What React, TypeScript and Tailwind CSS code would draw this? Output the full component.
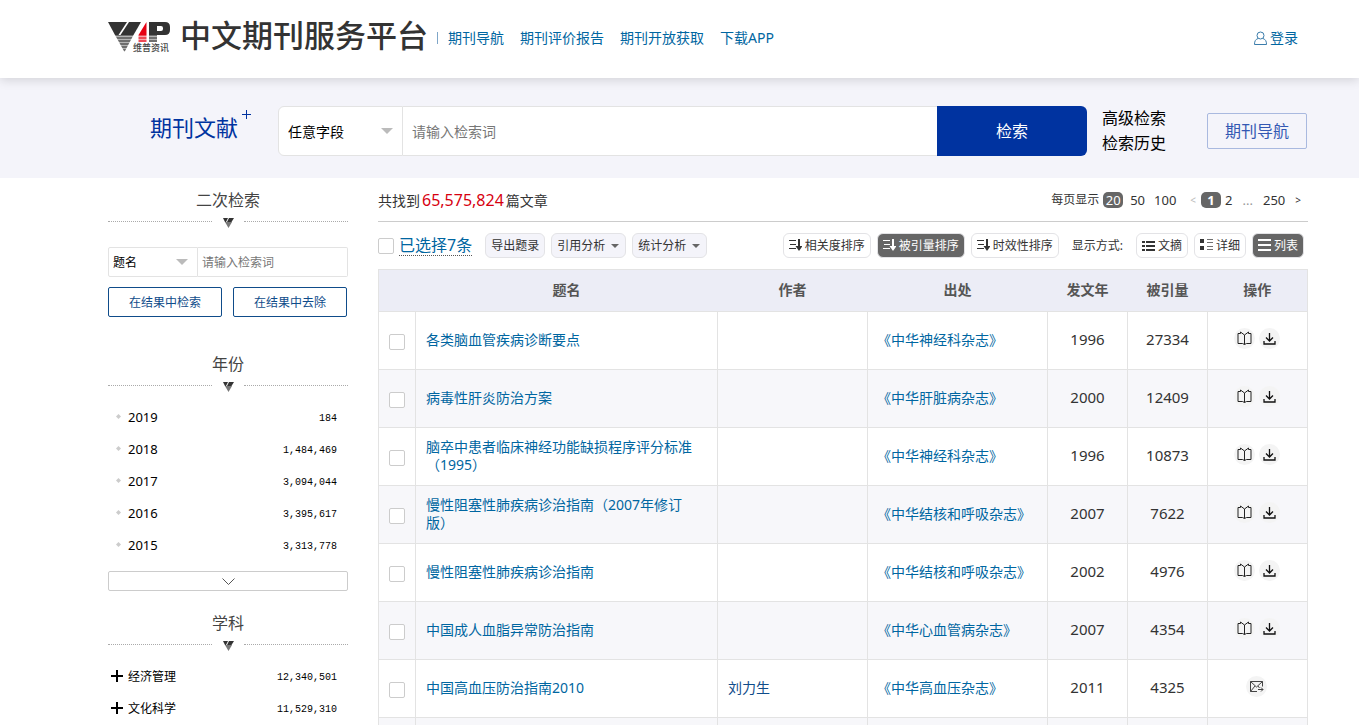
import React from "react";
import clsx from "clsx";

type Article = {
  title: string;
  author?: string;
  journal: string;
  year: number;
  cited: number;
  request?: boolean;
};

const navLinks = ["期刊导航", "期刊评价报告", "期刊开放获取", "下载APP"];

const years = [
  { name: "2019", count: "184" },
  { name: "2018", count: "1,484,469" },
  { name: "2017", count: "3,094,044" },
  { name: "2016", count: "3,395,617" },
  { name: "2015", count: "3,313,778" },
];

const subjects = [
  { name: "经济管理", count: "12,340,501" },
  { name: "文化科学", count: "11,529,310" },
];

const articles: Article[] = [
  { title: "各类脑血管疾病诊断要点", journal: "《中华神经科杂志》", year: 1996, cited: 27334 },
  { title: "病毒性肝炎防治方案", journal: "《中华肝脏病杂志》", year: 2000, cited: 12409 },
  { title: "脑卒中患者临床神经功能缺损程序评分标准（1995）", journal: "《中华神经科杂志》", year: 1996, cited: 10873 },
  { title: "慢性阻塞性肺疾病诊治指南（2007年修订版）", journal: "《中华结核和呼吸杂志》", year: 2007, cited: 7622 },
  { title: "慢性阻塞性肺疾病诊治指南", journal: "《中华结核和呼吸杂志》", year: 2002, cited: 4976 },
  { title: "中国成人血脂异常防治指南", journal: "《中华心血管病杂志》", year: 2007, cited: 4354 },
  { title: "中国高血压防治指南2010", author: "刘力生", journal: "《中华高血压杂志》", year: 2011, cited: 4325, request: true },
];

const Logo = () => (
  <svg width="62" height="32" viewBox="0 0 62 32" className="shrink-0" aria-label="维普资讯">
    <defs>
      <pattern id="stripes" width="4" height="3" patternUnits="userSpaceOnUse">
        <rect width="4" height="3" fill="#b5b5b5" />
        <rect width="4" height="2" y="1" fill="#6e6e6e" />
      </pattern>
      <pattern id="redStripes" width="4" height="3" patternUnits="userSpaceOnUse">
        <rect width="4" height="3" fill="#f9a3a9" />
        <rect width="4" height="2" y="1" fill="#ee4a55" />
      </pattern>
    </defs>
    <path d="M0 1H19L10.500 14H7Z" fill="#333" />
    <path d="M21 1H33L25.500 14H12.500Z" fill="#333" />
    <path d="M7 14H25.500L16.500 31Z" fill="url(#stripes)" />
    <path d="M38.500 1V14H30.500Z" fill="#e60012" />
    <path d="M30.500 14H38.500V21H30.500Z" fill="url(#redStripes)" />
    <path
      fillRule="evenodd"
      d="M41 1H57Q62 1 62 6V9Q62 14 57 14H41ZM49 5V10H53Q55 10 55 8V7Q55 5 53 5Z"
      fill="#333"
    />
    <path d="M41 14H49V21H41Z" fill="url(#stripes)" />
    <text x="25" y="30" fontSize="9" fontWeight="500" fill="#444">
      维普资讯
    </text>
  </svg>
);

const SortIcon = () => (
  <svg width="13" height="12" viewBox="0 0 13 12" fill="none" stroke="currentColor" className="mb-0.5">
    <path d="M0 1.500H7M1 5.500H7M0 9.500H7" strokeWidth="1" />
    <path d="M10 0V8" strokeWidth="2" />
    <path d="M6.500 7H13.500L10 12Z" fill="currentColor" stroke="none" />
  </svg>
);

const SummaryIcon = () => (
  <svg width="13" height="12" viewBox="0 0 13 12" fill="currentColor">
    <path d="M0 1H3V3H0ZM4 1H13V3H4ZM0 5H3V7H0ZM4 5H13V7H4ZM0 9H3V11H0ZM4 9H13V11H4Z" />
  </svg>
);

const DetailIcon = () => (
  <svg width="13" height="12" viewBox="0 0 13 12" fill="currentColor" className="mb-0.5">
    <path d="M0 0H4V4H0ZM0 7H4V11H0Z" />
    <path d="M7 0H13V1H7ZM7 3H13V4H7ZM7 7H13V8H7ZM7 10H13V11H7Z" opacity="0.700" />
  </svg>
);

const ListIcon = () => (
  <svg width="13" height="12" viewBox="0 0 13 12" fill="currentColor" className="mb-0.5">
    <path d="M0 0H13V2H0ZM0 5H13V7H0ZM0 10H13V12H0Z" />
  </svg>
);

const BookIcon = () => (
  <svg width="15" height="15" viewBox="0 0 15 15" fill="none" stroke="#222">
    <path d="M7.500 4V13.500M7.500 4L3.500 1V2.500H1V12.500H5.500L7.500 13.500L9.500 12.500H14V2.500H11.500V1Z" />
  </svg>
);

const DownloadIcon = () => (
  <svg width="13" height="13" viewBox="0 0 13 13" fill="none" stroke="#111" strokeWidth="1.300">
    <path d="M6.500 1V9M3 5.500L6.500 9L10 5.500M1 9V12H12V9" />
  </svg>
);

const MailIcon = () => (
  <svg width="14" height="13" viewBox="0 0 14 13" fill="none" stroke="#444">
    <path d="M12.500 6.500V1.500H.5V11.500H7M.5 1.500L6.500 7L12.500 1.500M.5 11.500L5 6M8 6L9.500 8M8 9.500H13M11 7.500L13 9.500L11 11.500" />
  </svg>
);

const Caret = ({ className }: { className?: string }) => (
  <svg width="12" height="6" viewBox="0 0 12 6" className={className}>
    <path d="M0 0H12L6 6Z" fill="currentColor" />
  </svg>
);

const Checkbox = ({ label }: { label: string }) => (
  <input
    type="checkbox"
    aria-label={label}
    className="block size-4 shrink-0 appearance-none rounded-xs border border-[#ccc] bg-white checked:bg-[#0033a0]"
  />
);

const SectionTitle = ({ children }: { children: React.ReactNode }) => (
  <div>
    <h2 className="pb-0.5 text-center text-base leading-[22px] text-[#444]">{children}</h2>
    <div className="flex h-4 items-center justify-between gap-2">
      <span className="w-26 border-t border-dotted border-[#aaa]" />
      <svg width="11" height="10" viewBox="0 0 11 10" className="mt-1">
        <path d="M0 0H5L3 4H2Z" fill="#333" />
        <path d="M6 0H11L8.500 4H4Z" fill="#333" />
        <path d="M2 4H9L5.500 10Z" fill="#777" />
      </svg>
      <span className="w-26 border-t border-dotted border-[#aaa]" />
    </div>
  </div>
);

const MenuButton = ({ children, caret }: { children: React.ReactNode; caret?: boolean }) => (
  <button className="flex h-[25px] items-center gap-1.5 rounded-md border border-[#e3e3e6] bg-[#f4f4fa] px-[5px] text-xs text-[#333]">
    {children}
    {caret && <Caret className="mr-px h-1 w-2 text-[#666]" />}
  </button>
);

const ToggleButton = ({
  icon,
  active,
  children,
}: {
  icon: React.ReactNode;
  active?: boolean;
  children: React.ReactNode;
}) => (
  <button
    aria-pressed={!!active}
    className={clsx(
      "flex h-[25px] items-center gap-[3px] rounded-md border border-[#e3e3e6] px-[5px] text-xs",
      active ? "bg-[#666] text-white" : "bg-white text-[#333]"
    )}
  >
    {icon}
    {children}
  </button>
);

const ActionButton = ({ label, children }: { label: string; children: React.ReactNode }) => (
  <button aria-label={label} className="flex size-[21px] items-center justify-center rounded-full bg-[#f4f4f4]">
    {children}
  </button>
);

const Header = () => (
  <header className="relative flex h-[78px] items-center bg-white pr-[61px] pb-1 pl-[108px] shadow-[0_2px_10px_rgba(0,0,0,0.14)]">
    <Logo />
    <h1 className="ml-[10px] pb-1 text-[31px] leading-9 font-medium whitespace-nowrap text-[#333]">
      中文期刊服务平台
    </h1>
    <nav className="ml-[9px] flex items-center gap-4 pt-0.5 text-sm whitespace-nowrap text-[#0066a1]">
      <span className="-mr-1.5 h-3 border-l border-[#7fa6c8]" />
      {navLinks.map((link) => (
        <a key={link} href="#">
          {link}
        </a>
      ))}
    </nav>
    <a href="#" className="ml-auto flex items-center gap-[3px] pt-0.5 text-sm text-[#0066a1]">
      <svg width="13" height="14" viewBox="0 0 13 14" fill="none" stroke="#3a7cab">
        <circle cx="6.500" cy="4.500" r="3.500" />
        <path d="M4 7.500C1.500 8.500 .5 10 .5 13.500H12.500C12.500 10 11.500 8.500 9 7.500" />
      </svg>
      登录
    </a>
  </header>
);

const SearchBar = () => (
  <section className="flex h-[100px] items-center bg-[#f4f4fa] pt-1.5 pr-13 pl-[108px]">
    <div className="flex w-[170px] shrink-0 pb-2 pl-[42px] text-[22px] leading-8 text-[#0033a0]">
      期刊文献
      <svg width="10" height="10" viewBox="0 0 10 10" className="-mt-px ml-1" stroke="#0033a0">
        <path d="M4.500 0V9M0 4.500H9" />
      </svg>
    </div>
    <div className="flex h-[50px] flex-1">
      <div className="relative w-[125px] shrink-0">
        <select
          aria-label="检索字段"
          className="h-full w-full appearance-none rounded-l-md border border-[#e3e3e3] bg-white pt-0.5 pl-[9px] text-sm text-black"
        >
          <option>任意字段</option>
        </select>
        <Caret className="pointer-events-none absolute top-[22px] right-[10px] text-[#bbb]" />
      </div>
      <input
        type="text"
        aria-label="检索词"
        placeholder="请输入检索词"
        className="min-w-0 flex-1 border-y border-[#e3e3e3] bg-white px-[9px] pt-0.5 text-sm placeholder:text-[#777]"
      />
      <button className="w-[150px] shrink-0 rounded-r-md bg-[#0033a0] text-base text-white">检索</button>
    </div>
    <div className="ml-[15px] flex flex-col text-base leading-[25px] text-black">
      <a href="#">高级检索</a>
      <a href="#">检索历史</a>
    </div>
    <button className="ml-[41px] h-9 w-[100px] rounded-xs border border-[#a9b9df] text-base text-[#3358b3]">
      期刊导航
    </button>
  </section>
);

const Sidebar = () => (
  <aside className="w-60 shrink-0 pt-[11px]">
    <SectionTitle>二次检索</SectionTitle>
    <div className="mt-[18px] flex h-[30px]">
      <div className="relative w-[90px] shrink-0">
        <select
          aria-label="字段"
          className="h-full w-full appearance-none rounded-l-xs border border-[#e3e3e3] bg-white pt-0.5 pl-1 text-xs text-black"
        >
          <option>题名</option>
        </select>
        <Caret className="pointer-events-none absolute top-3 right-[10px] text-[#bbb]" />
      </div>
      <input
        type="text"
        aria-label="二次检索词"
        placeholder="请输入检索词"
        className="min-w-0 flex-1 rounded-r-xs border border-l-0 border-[#e3e3e3] px-1 pt-0.5 text-xs placeholder:text-[#777]"
      />
    </div>
    <div className="mt-[10px] grid grid-cols-2 gap-[11px] pr-px text-xs text-[#0f4c8a]">
      <button className="h-[30px] rounded-xs border border-[#0f4c8a] pt-0.5">在结果中检索</button>
      <button className="h-[30px] rounded-xs border border-[#0f4c8a] pt-0.5">在结果中去除</button>
    </div>

    <div className="mt-9">
      <SectionTitle>年份</SectionTitle>
      <ul className="pt-2">
        {years.map((y) => (
          <li key={y.name} className="flex h-8 items-center pt-0.5 pr-[11px] pl-2">
            <svg width="5" height="5" viewBox="0 0 5 5" className="mb-1">
              <path d="M2.500 0L5 2.500L2.500 5L0 2.500Z" fill="#ccc" />
            </svg>
            <a href="#" className="ml-[7px] text-[13px] text-black">
              {y.name}
            </a>
            <span className="ml-auto font-['Liberation_Mono',monospace] text-[10px] text-black">{y.count}</span>
          </li>
        ))}
      </ul>
      <button
        aria-label="展开更多年份"
        className="mt-[10px] flex h-5 w-full items-center justify-center rounded-xs border border-[#ccc]"
      >
        <svg width="13" height="7" viewBox="0 0 13 7" fill="none" stroke="#555">
          <path d="M.5 .5L6.500 6.500L12.500 .5" />
        </svg>
      </button>
    </div>

    <div className="mt-[21px]">
      <SectionTitle>学科</SectionTitle>
      <ul className="pt-2">
        {subjects.map((s) => (
          <li key={s.name} className="flex h-8 items-center pt-0.5 pr-[11px] pl-[3px]">
            <svg width="12" height="12" viewBox="0 0 12 12" stroke="#000" strokeWidth="2" className="mb-0.5">
              <path d="M6 0V12M0 6H12" />
            </svg>
            <a href="#" className="ml-[5px] text-xs text-black">
              {s.name}
            </a>
            <span className="ml-auto font-['Liberation_Mono',monospace] text-[10px] text-black">{s.count}</span>
          </li>
        ))}
      </ul>
    </div>
  </aside>
);

const Pagination = () => (
  <div className="flex items-center text-[13px] leading-4 text-[#333]">
    <span className="text-xs">每页显示</span>
    <a href="#" className="ml-1 w-5 rounded-[5px] bg-[#666] text-center text-white">
      20
    </a>
    <a href="#" className="ml-[7px]">
      50
    </a>
    <a href="#" className="ml-[9px]">
      100
    </a>
    <span className="ml-[14px] text-[10px] text-[#bbb]">&lt;</span>
    <a href="#" className="ml-[5px] w-5 rounded-[5px] bg-[#666] text-center font-bold text-white">
      1
    </a>
    <a href="#" className="ml-1">
      2
    </a>
    <span className="ml-[10px] text-[#999]">...</span>
    <a href="#" className="ml-[10px]">
      250
    </a>
    <a href="#" className="ml-[10px] text-[10px]">
      &gt;
    </a>
  </div>
);

const ResultTable = () => (
  <table className="w-full table-fixed border-collapse border border-[#e3e3e3] text-sm text-[#333]">
    <colgroup>
      <col className="w-[37px]" />
      <col />
      <col className="w-[150px]" />
      <col className="w-[180px]" />
      <col className="w-20" />
      <col className="w-20" />
      <col className="w-[100px]" />
    </colgroup>
    <thead>
      <tr className="h-[42px] bg-[#ecedf6] text-[#555]">
        <td />
        <th className="pb-0.5">题名</th>
        <th className="pb-0.5">作者</th>
        <th className="pb-0.5">出处</th>
        <th className="pb-0.5">发文年</th>
        <th className="pb-0.5">被引量</th>
        <th className="pb-0.5">操作</th>
      </tr>
    </thead>
    <tbody>
      {articles.map((a) => (
        <tr key={a.title} className="h-[58px] even:bg-[#f7f7fa]">
          <td className="border border-[#e3e3e3] pt-0.5 pl-[10px]">
            <Checkbox label={a.title} />
          </td>
          <td className="border border-[#e3e3e3] pr-4 pb-0.5 pl-[10px] leading-[18px]">
            <a href="#" className="text-[#0066a1]">
              {a.title}
            </a>
          </td>
          <td className="border border-[#e3e3e3] px-[10px] pb-0.5">
            {a.author && (
              <a href="#" className="text-[#0f4c8a]">
                {a.author}
              </a>
            )}
          </td>
          <td className="border border-[#e3e3e3] pb-0.5 pl-[9px]">
            <a href="#" className="text-[#0066a1]">
              {a.journal}
            </a>
          </td>
          <td className="border border-[#e3e3e3] pb-0.5 text-center text-[15px]">{a.year}</td>
          <td className="border border-[#e3e3e3] pb-0.5 text-center text-[15px]">{a.cited}</td>
          <td className="border border-[#e3e3e3] pr-0.5 pb-1">
            <div className="flex justify-center gap-1">
              {a.request ? (
                <ActionButton label="原文传递">
                  <MailIcon />
                </ActionButton>
              ) : (
                <>
                  <ActionButton label="在线阅读">
                    <BookIcon />
                  </ActionButton>
                  <ActionButton label="下载PDF">
                    <DownloadIcon />
                  </ActionButton>
                </>
              )}
            </div>
          </td>
        </tr>
      ))}
      <tr className="h-[58px] even:bg-[#f7f7fa]">
        {Array.from({ length: 7 }, (_, i) => (
          <td key={i} className="border border-[#e3e3e3]" />
        ))}
      </tr>
    </tbody>
  </table>
);

export default function App() {
  return (
    <div className="h-screen overflow-hidden bg-white font-['Noto_Sans','Noto_Sans_CJK_SC',sans-serif]">
      <Header />
      <SearchBar />
      <div className="flex gap-[30px] pr-[51px] pl-[108px]">
        <Sidebar />
        <main className="min-w-0 flex-1">
          {/* Result count */}
          <div className="flex h-11 items-center justify-between border-b border-[#ccc] pr-[7px]">
            <p className="text-sm text-[#333]">
              共找到<span className="px-0.5 text-base text-[#d7000f]">65,575,824</span>篇文章
            </p>
            <Pagination />
          </div>

          {/* Toolbar */}
          <div className="flex h-[47px] items-center justify-between pr-1">
            <div className="flex items-center gap-1.5">
              <Checkbox label="全选" />
              <a
                href="#"
                className="-ml-px mr-[7px] border-b border-dotted border-[#555] text-base leading-5 text-[#0066a1]"
              >
                已选择7条
              </a>
              <MenuButton>导出题录</MenuButton>
              <MenuButton caret>引用分析</MenuButton>
              <MenuButton caret>统计分析</MenuButton>
            </div>
            <div className="flex items-center gap-1.5">
              <ToggleButton icon={<SortIcon />}>相关度排序</ToggleButton>
              <ToggleButton icon={<SortIcon />} active>
                被引量排序
              </ToggleButton>
              <ToggleButton icon={<SortIcon />}>时效性排序</ToggleButton>
              <span className="mx-[7px] text-xs text-[#333]">显示方式:</span>
              <ToggleButton icon={<SummaryIcon />}>文摘</ToggleButton>
              <ToggleButton icon={<DetailIcon />}>详细</ToggleButton>
              <ToggleButton icon={<ListIcon />} active>
                列表
              </ToggleButton>
            </div>
          </div>

          <ResultTable />
        </main>
      </div>
    </div>
  );
}
